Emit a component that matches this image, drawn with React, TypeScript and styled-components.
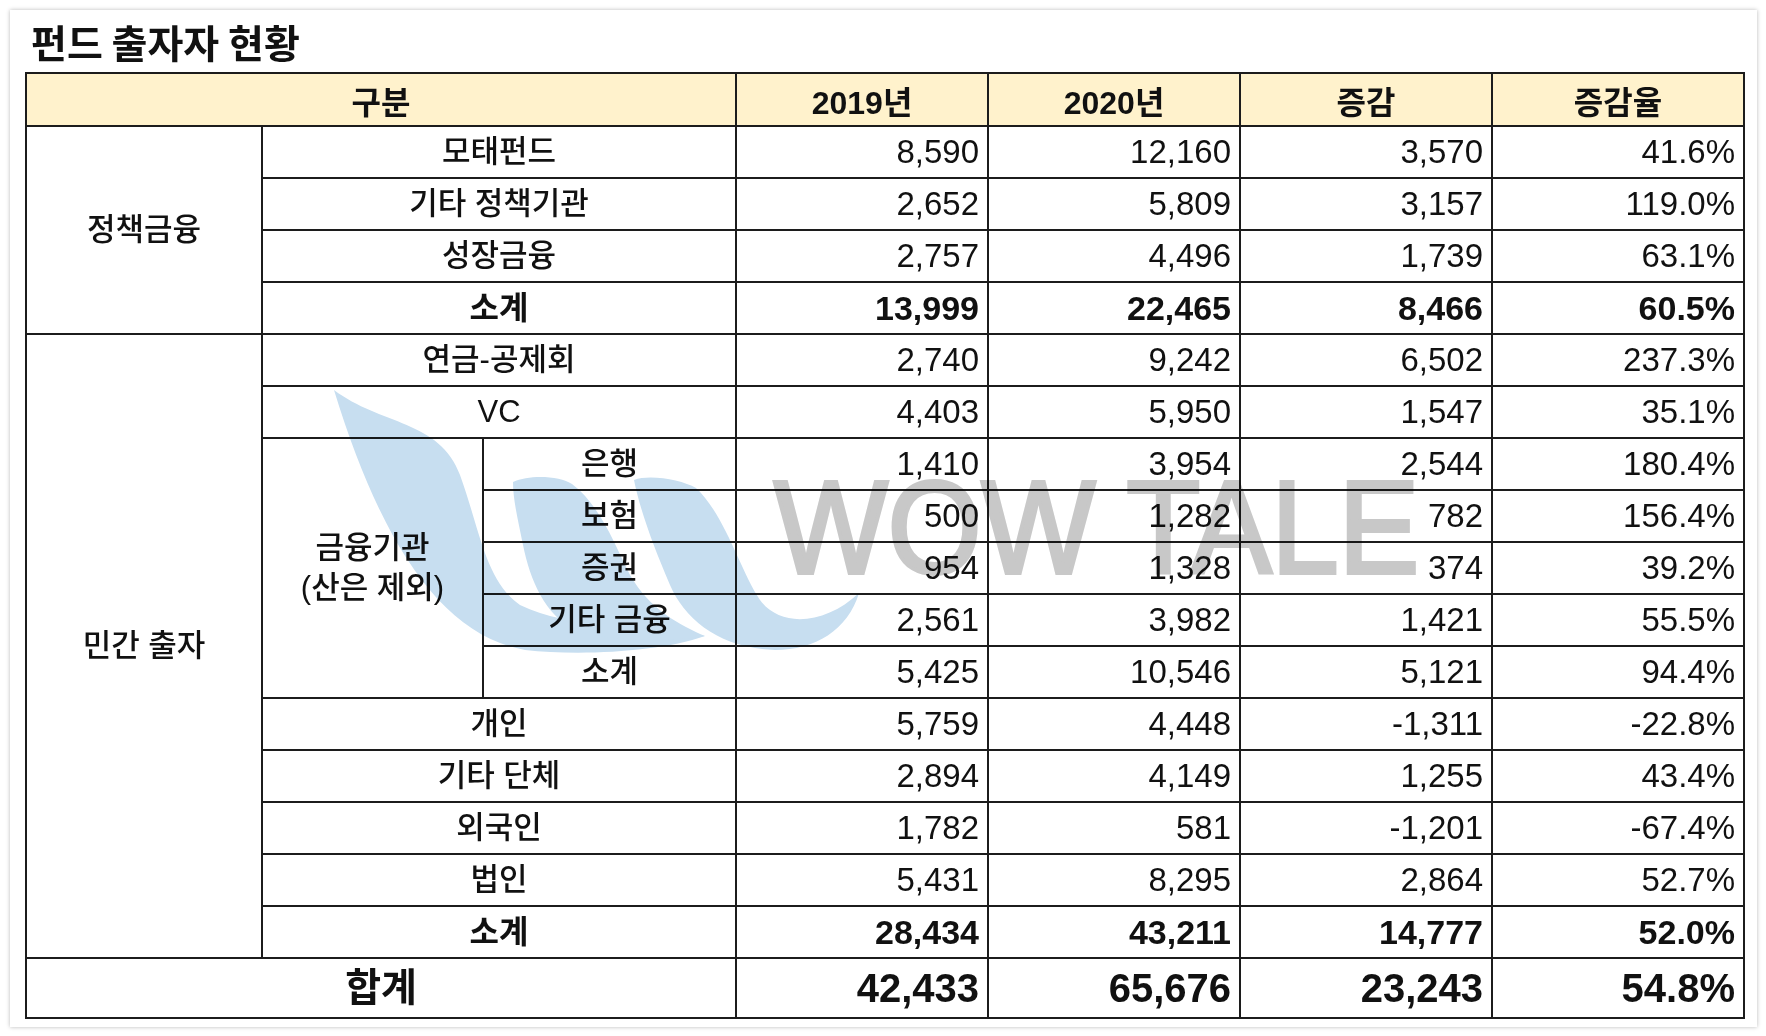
import React from "react";
import styled, { createGlobalStyle } from "styled-components";

const GlobalStyle = createGlobalStyle`
  body {
    margin: 0;
    background: #ffffff;
  }
`;

const Card = styled.div`
  position: relative;
  box-sizing: border-box;
  margin: 10px;
  width: 1747px;
  height: 1017px;
  padding: 9px 14px 10px 15px;
  background: #ffffff;
  box-shadow: 0 0 4px rgba(0, 0, 0, 0.28);
`;

const Title = styled.h1`
  margin: 0 0 9px 0;
  padding-left: 6px;
  height: 44px;
  font-family: "Noto Sans CJK KR", sans-serif;
  font-size: 39px;
  line-height: 44px;
  font-weight: 700;
  color: #111111;
`;

const TableWrap = styled.div`
  position: relative;
`;

const Table = styled.table`
  width: 1718px;
  table-layout: fixed;
  border-collapse: collapse;
  font-family: "Liberation Sans", "Noto Sans CJK KR", sans-serif;
  color: #111111;
`;

const HeadRow = styled.tr`
  height: 53px;
  background: #fff2cc;
`;

const Row = styled.tr<{ $total?: boolean }>`
  height: ${(p) => (p.$total ? "60px" : "52px")};
`;

const Cell = styled.td<{
  $align?: "left" | "center" | "right";
  $bold?: boolean;
  $size?: number;
}>`
  border: 2px solid #1c1c1c;
  padding: 0 8px;
  text-align: ${(p) => p.$align ?? "center"};
  vertical-align: middle;
  font-size: ${(p) => p.$size ?? (p.$bold ? 34 : 33)}px;
  font-weight: ${(p) => (p.$bold ? 700 : 400)};
  line-height: 1.2;
  white-space: nowrap;
`;

const Label = styled(Cell)`
  font-size: ${(p) => p.$size ?? (p.$bold ? 32 : 31)}px;
  font-weight: ${(p) => (p.$bold ? 700 : 500)};
`;

const StackLabel = styled(Label)`
  line-height: 40px;
`;

const HeadCell = styled.th`
  border: 2px solid #1c1c1c;
  padding: 0 8px;
  text-align: center;
  vertical-align: middle;
  font-size: 32px;
  font-weight: 700;
`;

const Watermark = styled.div`
  position: absolute;
  inset: 0;
  pointer-events: none;
  mix-blend-mode: multiply;
`;

const Logo = styled.svg`
  position: absolute;
  left: 295px;
  top: 308px;
  width: 560px;
  height: 290px;
`;

const WaterText = styled.div`
  position: absolute;
  left: 749px;
  top: 390px;
  font-family: "Liberation Sans", sans-serif;
  font-size: 131px;
  line-height: 1;
  color: #c8c8c8;
  -webkit-text-stroke: 4px #c8c8c8;
  white-space: nowrap;
  transform: scaleX(0.92);
  transform-origin: left top;
`;

type Line = [string, string, string, string, string];

const policy: Line[] = [
  ["모태펀드", "8,590", "12,160", "3,570", "41.6%"],
  ["기타 정책기관", "2,652", "5,809", "3,157", "119.0%"],
  ["성장금융", "2,757", "4,496", "1,739", "63.1%"],
];
const policySum: Line = ["소계", "13,999", "22,465", "8,466", "60.5%"];

const privateTop: Line[] = [
  ["연금-공제회", "2,740", "9,242", "6,502", "237.3%"],
  ["VC", "4,403", "5,950", "1,547", "35.1%"],
];

const finance: Line[] = [
  ["은행", "1,410", "3,954", "2,544", "180.4%"],
  ["보험", "500", "1,282", "782", "156.4%"],
  ["증권", "954", "1,328", "374", "39.2%"],
  ["기타 금융", "2,561", "3,982", "1,421", "55.5%"],
  ["소계", "5,425", "10,546", "5,121", "94.4%"],
];

const privateRest: Line[] = [
  ["개인", "5,759", "4,448", "-1,311", "-22.8%"],
  ["기타 단체", "2,894", "4,149", "1,255", "43.4%"],
  ["외국인", "1,782", "581", "-1,201", "-67.4%"],
  ["법인", "5,431", "8,295", "2,864", "52.7%"],
];
const privateSum: Line = ["소계", "28,434", "43,211", "14,777", "52.0%"];

const total: Line = ["합계", "42,433", "65,676", "23,243", "54.8%"];

const Numbers = ({ line, bold, size }: { line: Line; bold?: boolean; size?: number }) => (
  <>
    {line.slice(1).map((v, i) => (
      <Cell key={i} $align="right" $bold={bold} $size={size}>
        {v}
      </Cell>
    ))}
  </>
);

const WowLogo = () => (
  <Logo viewBox="0 0 560 290">
    <g fill="#c7def0">
      <path d="M14 10 C60 45 120 40 140 95 C160 150 165 200 200 225 C250 250 330 245 385 256 C340 272 260 276 205 270 C120 255 60 160 14 10 Z" />
      <path d="M193 102 C210 94 240 96 252 104 C280 125 295 165 310 195 C330 230 360 245 385 256 C350 262 290 262 255 250 C225 235 210 200 203 165 C198 140 193 120 193 102 Z" />
      <path d="M314 100 C330 94 362 100 376 108 C405 135 420 190 440 220 C460 248 505 245 539 213 C528 250 495 270 455 270 C400 268 365 240 350 205 C333 165 320 130 314 100 Z" />
    </g>
  </Logo>
);

const App = () => {
  return (
    <>
      <GlobalStyle />
      <Card>
        <Title>펀드 출자자 현황</Title>
        <TableWrap>
          <Table>
            <colgroup>
              <col style={{ width: 236 }} />
              <col style={{ width: 221 }} />
              <col style={{ width: 253 }} />
              <col style={{ width: 252 }} />
              <col style={{ width: 252 }} />
              <col style={{ width: 252 }} />
              <col style={{ width: 252 }} />
            </colgroup>
            <thead>
              <HeadRow>
                <HeadCell colSpan={3}>구분</HeadCell>
                <HeadCell>2019년</HeadCell>
                <HeadCell>2020년</HeadCell>
                <HeadCell>증감</HeadCell>
                <HeadCell>증감율</HeadCell>
              </HeadRow>
            </thead>
            <tbody>
              {policy.map((line, i) => (
                <Row key={line[0]}>
                  {i === 0 && <Label rowSpan={4}>정책금융</Label>}
                  <Label colSpan={2}>{line[0]}</Label>
                  <Numbers line={line} />
                </Row>
              ))}
              <Row>
                <Label colSpan={2} $bold>
                  {policySum[0]}
                </Label>
                <Numbers line={policySum} bold />
              </Row>

              {privateTop.map((line, i) => (
                <Row key={line[0]}>
                  {i === 0 && <Label rowSpan={12}>민간 출자</Label>}
                  <Label colSpan={2}>{line[0]}</Label>
                  <Numbers line={line} />
                </Row>
              ))}
              {finance.map((line, i) => (
                <Row key={line[0] + i}>
                  {i === 0 && (
                    <StackLabel rowSpan={5}>
                      금융기관
                      <br />
                      (산은 제외)
                    </StackLabel>
                  )}
                  <Label>{line[0]}</Label>
                  <Numbers line={line} />
                </Row>
              ))}
              {privateRest.map((line) => (
                <Row key={line[0]}>
                  <Label colSpan={2}>{line[0]}</Label>
                  <Numbers line={line} />
                </Row>
              ))}
              <Row>
                <Label colSpan={2} $bold>
                  {privateSum[0]}
                </Label>
                <Numbers line={privateSum} bold />
              </Row>

              <Row $total>
                <Label colSpan={3} $bold $size={39}>
                  {total[0]}
                </Label>
                <Numbers line={total} bold size={40} />
              </Row>
            </tbody>
          </Table>
          <Watermark>
            <WowLogo />
            <WaterText>WOW TALE</WaterText>
          </Watermark>
        </TableWrap>
      </Card>
    </>
  );
};

export default App;
